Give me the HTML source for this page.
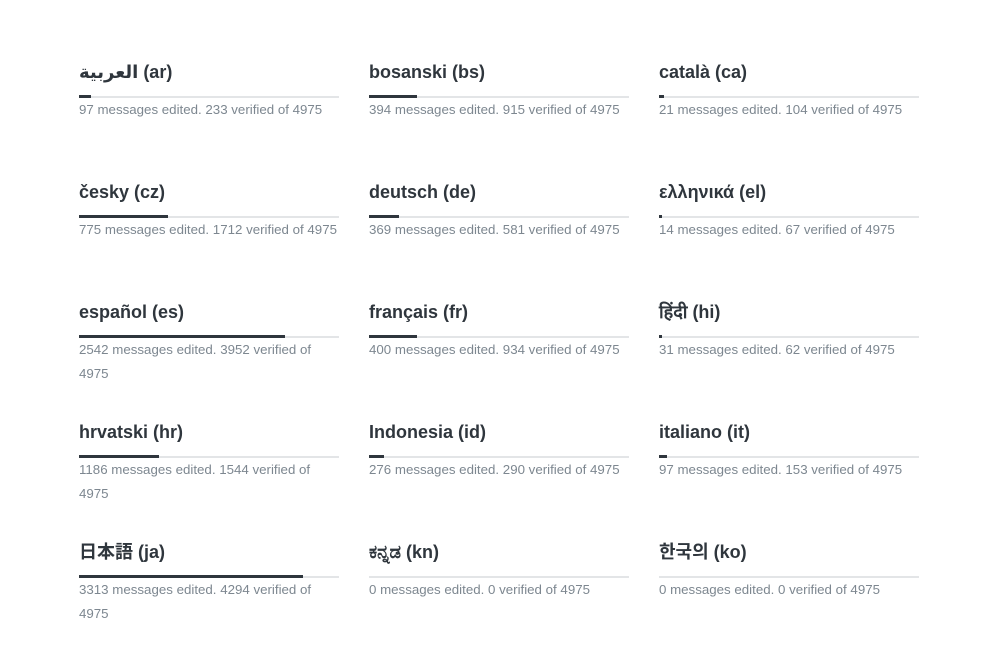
<!DOCTYPE html>
<html><head><meta charset="utf-8"><style>
body{margin:0;background:#fff;width:997px;height:651px;overflow:hidden;font-family:"Liberation Sans","Noto Sans CJK JP","DejaVu Sans",sans-serif}
.c{position:absolute;width:260px}
.t{font-size:18px;font-weight:bold;color:#2f363d;height:24px;line-height:24px;position:absolute;top:-12px;left:0;white-space:nowrap}
.b{position:absolute;top:24px;left:0;width:260px;height:2px;background:#e3e5e7}
.f{position:absolute;top:23px;left:0;height:3px;background:#2f363d}
.s{position:absolute;top:26px;left:0;width:267px;font-size:13.3px;line-height:24px;color:#7d8790}
</style></head><body>
<div class="c" style="left:79px;top:72px"><div class="t">العربية (ar)</div><div class="b"></div><div class="f" style="width:12px"></div><div class="s">97 messages edited. 233 verified of 4975</div></div>
<div class="c" style="left:369px;top:72px"><div class="t">bosanski (bs)</div><div class="b"></div><div class="f" style="width:48px"></div><div class="s">394 messages edited. 915 verified of 4975</div></div>
<div class="c" style="left:659px;top:72px"><div class="t">català (ca)</div><div class="b"></div><div class="f" style="width:5px"></div><div class="s">21 messages edited. 104 verified of 4975</div></div>
<div class="c" style="left:79px;top:192px"><div class="t">česky (cz)</div><div class="b"></div><div class="f" style="width:89px"></div><div class="s">775 messages edited. 1712 verified of 4975</div></div>
<div class="c" style="left:369px;top:192px"><div class="t">deutsch (de)</div><div class="b"></div><div class="f" style="width:30px"></div><div class="s">369 messages edited. 581 verified of 4975</div></div>
<div class="c" style="left:659px;top:192px"><div class="t">ελληνικά (el)</div><div class="b"></div><div class="f" style="width:3px"></div><div class="s">14 messages edited. 67 verified of 4975</div></div>
<div class="c" style="left:79px;top:312px"><div class="t">español (es)</div><div class="b"></div><div class="f" style="width:206px"></div><div class="s">2542 messages edited. 3952 verified of<br>4975</div></div>
<div class="c" style="left:369px;top:312px"><div class="t">français (fr)</div><div class="b"></div><div class="f" style="width:48px"></div><div class="s">400 messages edited. 934 verified of 4975</div></div>
<div class="c" style="left:659px;top:312px"><div class="t">हिंदी (hi)</div><div class="b"></div><div class="f" style="width:3px"></div><div class="s">31 messages edited. 62 verified of 4975</div></div>
<div class="c" style="left:79px;top:432px"><div class="t">hrvatski (hr)</div><div class="b"></div><div class="f" style="width:80px"></div><div class="s">1186 messages edited. 1544 verified of<br>4975</div></div>
<div class="c" style="left:369px;top:432px"><div class="t">Indonesia (id)</div><div class="b"></div><div class="f" style="width:15px"></div><div class="s">276 messages edited. 290 verified of 4975</div></div>
<div class="c" style="left:659px;top:432px"><div class="t">italiano (it)</div><div class="b"></div><div class="f" style="width:8px"></div><div class="s">97 messages edited. 153 verified of 4975</div></div>
<div class="c" style="left:79px;top:552px"><div class="t">日本語 (ja)</div><div class="b"></div><div class="f" style="width:224px"></div><div class="s">3313 messages edited. 4294 verified of<br>4975</div></div>
<div class="c" style="left:369px;top:552px"><div class="t">ಕನ್ನಡ (kn)</div><div class="b"></div><div class="s">0 messages edited. 0 verified of 4975</div></div>
<div class="c" style="left:659px;top:552px"><div class="t">한국의 (ko)</div><div class="b"></div><div class="s">0 messages edited. 0 verified of 4975</div></div>
</body></html>
